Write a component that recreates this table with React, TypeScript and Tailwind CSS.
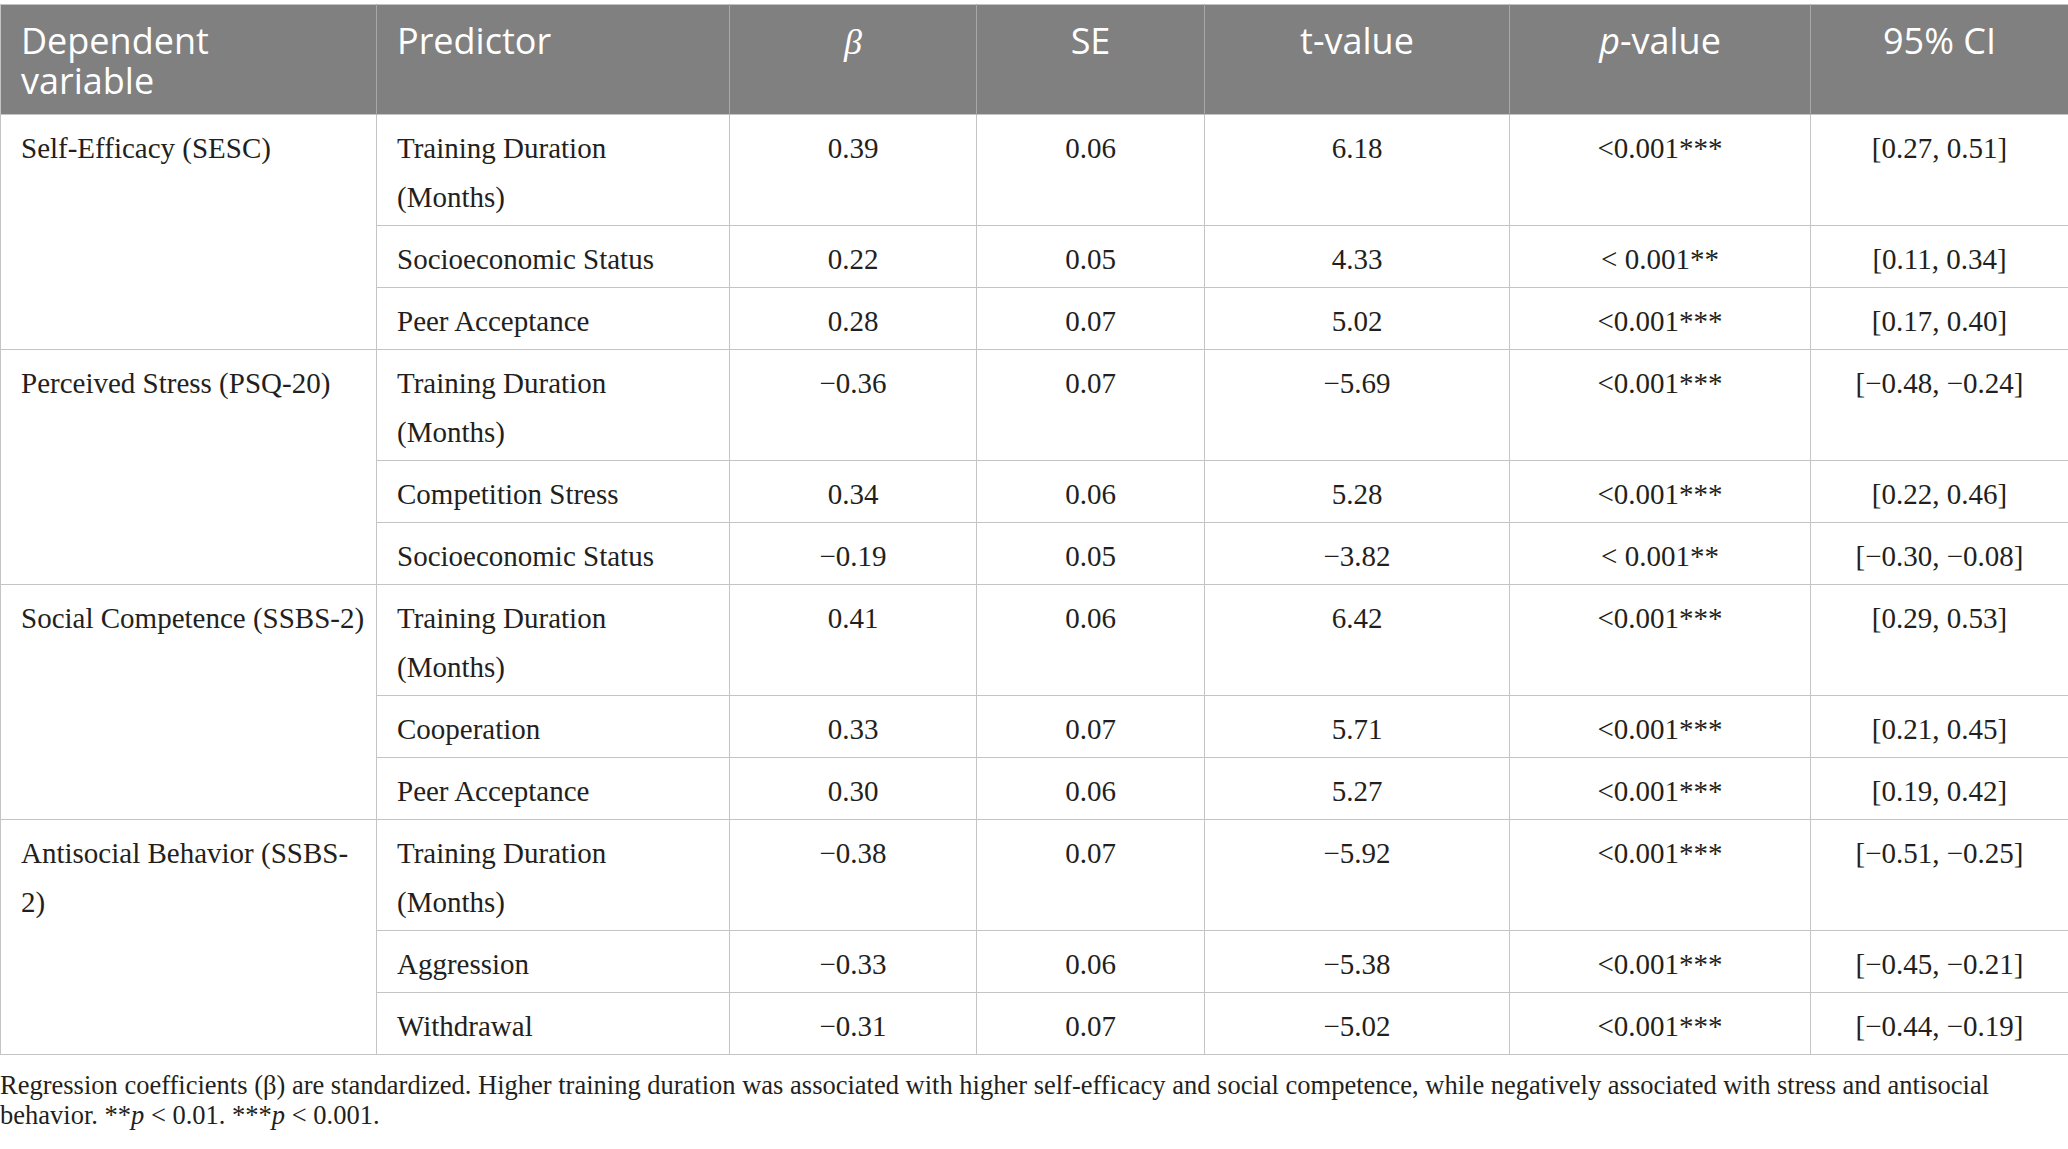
import React from "react"

type Row = {
  predictor: React.ReactNode
  beta: string
  se: string
  t: string
  p: string
  ci: string
}

type Group = {
  dependent: React.ReactNode
  rows: Row[]
}

const M = "\u2212"

const groups: Group[] = [
  {
    dependent: "Self-Efficacy (SESC)",
    rows: [
      { predictor: "Training Duration (Months)", beta: "0.39", se: "0.06", t: "6.18", p: "<0.001***", ci: "[0.27, 0.51]" },
      { predictor: "Socioeconomic Status", beta: "0.22", se: "0.05", t: "4.33", p: "< 0.001**", ci: "[0.11, 0.34]" },
      { predictor: "Peer Acceptance", beta: "0.28", se: "0.07", t: "5.02", p: "<0.001***", ci: "[0.17, 0.40]" },
    ],
  },
  {
    dependent: "Perceived Stress (PSQ-20)",
    rows: [
      { predictor: "Training Duration (Months)", beta: `${M}0.36`, se: "0.07", t: `${M}5.69`, p: "<0.001***", ci: `[${M}0.48, ${M}0.24]` },
      { predictor: "Competition Stress", beta: "0.34", se: "0.06", t: "5.28", p: "<0.001***", ci: "[0.22, 0.46]" },
      { predictor: "Socioeconomic Status", beta: `${M}0.19`, se: "0.05", t: `${M}3.82`, p: "< 0.001**", ci: `[${M}0.30, ${M}0.08]` },
    ],
  },
  {
    dependent: "Social Competence (SSBS-2)",
    rows: [
      { predictor: "Training Duration (Months)", beta: "0.41", se: "0.06", t: "6.42", p: "<0.001***", ci: "[0.29, 0.53]" },
      { predictor: "Cooperation", beta: "0.33", se: "0.07", t: "5.71", p: "<0.001***", ci: "[0.21, 0.45]" },
      { predictor: "Peer Acceptance", beta: "0.30", se: "0.06", t: "5.27", p: "<0.001***", ci: "[0.19, 0.42]" },
    ],
  },
  {
    dependent: (
      <>
        Antisocial Behavior (SSBS-
        <br />
        2)
      </>
    ),
    rows: [
      { predictor: "Training Duration (Months)", beta: `${M}0.38`, se: "0.07", t: `${M}5.92`, p: "<0.001***", ci: `[${M}0.51, ${M}0.25]` },
      { predictor: "Aggression", beta: `${M}0.33`, se: "0.06", t: `${M}5.38`, p: "<0.001***", ci: `[${M}0.45, ${M}0.21]` },
      { predictor: "Withdrawal", beta: `${M}0.31`, se: "0.07", t: `${M}5.02`, p: "<0.001***", ci: `[${M}0.44, ${M}0.19]` },
    ],
  },
]

const serif = "font-['Liberation_Serif','Times_New_Roman',serif]"
const th = "border-x border-[#a8a8a8] px-[20px] pt-[16px] pb-[13px] align-top font-normal"
const td = "border border-[#c4c4c4] px-[20px] pt-[9px] pb-[3px] align-top"

export default function App() {
  return (
    <div className="w-[2068px] bg-white pt-[4px] text-[#231f20]">
      <table className="w-full table-fixed border-collapse border border-[#c4c4c4]">
        <colgroup>
          <col className="w-[376px]" />
          <col className="w-[353px]" />
          <col className="w-[247px]" />
          <col className="w-[228px]" />
          <col className="w-[305px]" />
          <col className="w-[301px]" />
          <col className="w-[258px]" />
        </colgroup>
        <thead>
          <tr className="bg-[#808080] font-['Open_Sans','Noto_Sans',sans-serif] text-[36px] leading-[40px] text-white">
            <th className={`${th} border-l-[#c4c4c4] text-left`}>
              Dependent
              <br />
              variable
            </th>
            <th className={`${th} text-left`}>Predictor</th>
            <th className={`${th} text-center`}>
              <span className={`${serif} italic`}>β</span>
            </th>
            <th className={`${th} text-center`}>SE</th>
            <th className={`${th} text-center`}>t-value</th>
            <th className={`${th} text-center`}>
              <span className="italic">p</span>-value
            </th>
            <th className={`${th} border-r-[#c4c4c4] text-center`}>95% CI</th>
          </tr>
        </thead>
        <tbody className={`${serif} text-[29px] leading-[49px]`}>
          {groups.map((group, gi) =>
            group.rows.map((row, ri) => (
              <tr key={`${gi}-${ri}`}>
                {ri === 0 && (
                  <td rowSpan={group.rows.length} className={`${td} pr-[8px] text-left`}>
                    {group.dependent}
                  </td>
                )}
                <td className={`${td} text-left`}>{row.predictor}</td>
                <td className={`${td} text-center`}>{row.beta}</td>
                <td className={`${td} text-center`}>{row.se}</td>
                <td className={`${td} text-center`}>{row.t}</td>
                <td className={`${td} text-center`}>{row.p}</td>
                <td className={`${td} text-center`}>{row.ci}</td>
              </tr>
            )),
          )}
        </tbody>
      </table>
      <p className={`${serif} mt-[15px] pr-[20px] text-[26.5px] leading-[30px]`}>
        Regression coefficients (β) are standardized. Higher training duration was associated with higher
        self-efficacy and social competence, while negatively associated with stress and antisocial
        <br />
        behavior. **<span className="italic">p</span> &lt; 0.01. ***<span className="italic">p</span> &lt; 0.001.
      </p>
    </div>
  )
}
